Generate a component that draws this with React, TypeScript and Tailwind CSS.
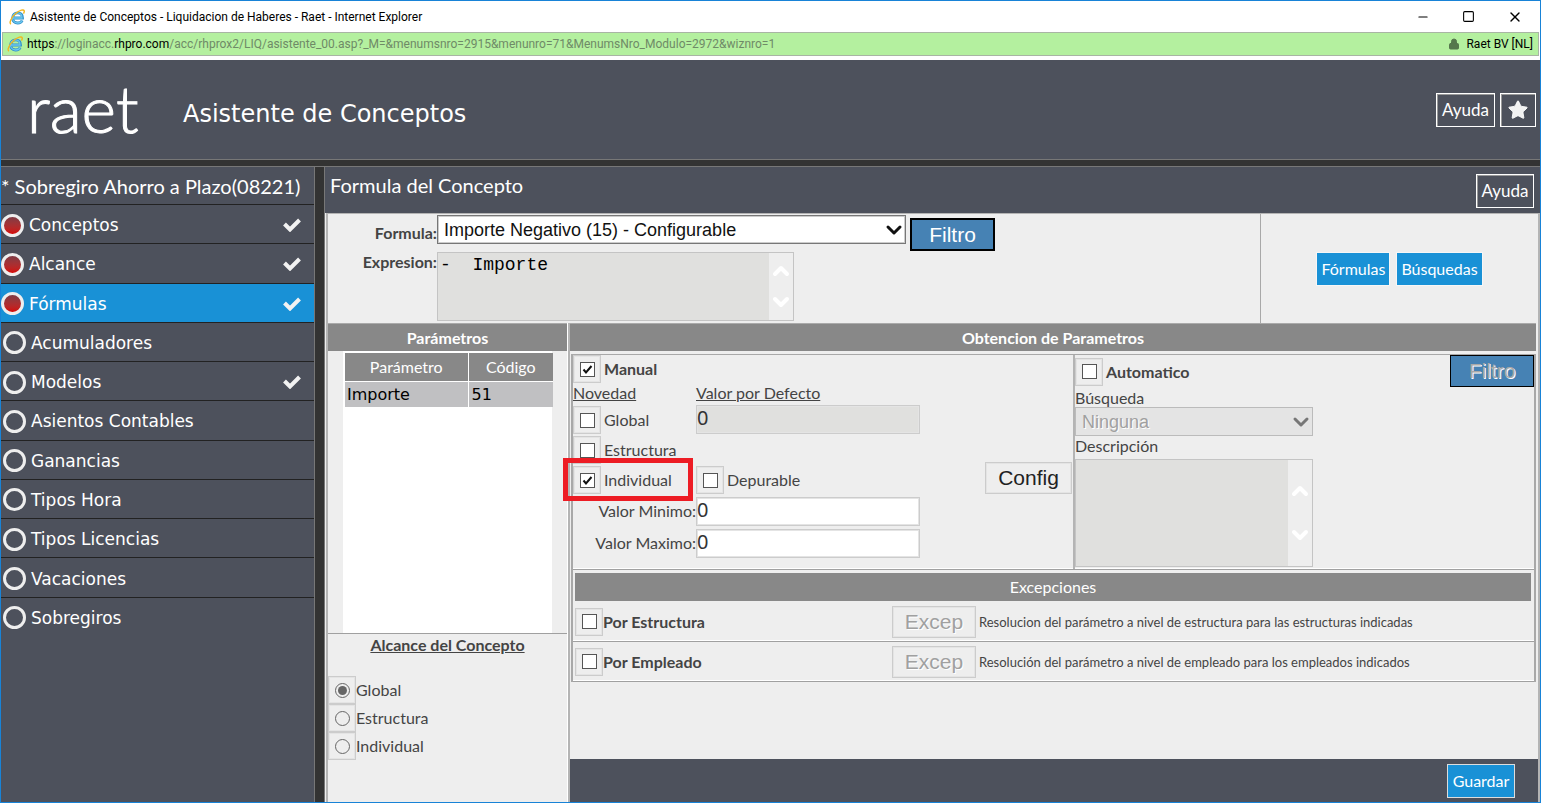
import React, { useState } from 'react';
import { ChevronDown, ChevronUp, Lock, Minus, Square, Star, X } from 'lucide-react';

interface MenuEntry {
  label: string;
  visited?: boolean;
  done?: boolean;
}

const MENU: MenuEntry[] = [
  { label: 'Conceptos', visited: true, done: true },
  { label: 'Alcance', visited: true, done: true },
  { label: 'Fórmulas', visited: true, done: true },
  { label: 'Acumuladores' },
  { label: 'Modelos', done: true },
  { label: 'Asientos Contables' },
  { label: 'Ganancias' },
  { label: 'Tipos Hora' },
  { label: 'Tipos Licencias' },
  { label: 'Vacaciones' },
  { label: 'Sobregiros' },
];

const FRAME = 'grid size-7 shrink-0 place-items-center border border-[#ccc] shadow-[inset_0_0_0_1px_#e4e4e4]';
const FIELD =
  "h-[29px] border border-[#ccc] pb-1 shadow-[inset_0_0_0_1px_#e4e4e4] font-['Noto_Sans',sans-serif] text-[20px] text-[#333]";
const OUTLINE_BUTTON = 'border border-white shadow-[inset_1px_1px_0_#999] text-[17px] leading-5';

const IeIcon: React.FC = () => (
  <svg viewBox="0 0 16 16" className="size-4 shrink-0">
    <path d="M4 9h9.500C13.500 5.500 11.500 3.800 8.700 3.800 5.800 3.800 3.600 5.900 3.600 9c0 3 2.200 5 5.100 5 2.100 0 3.800-.900 4.500-2.500" fill="none" stroke="#2f8fc8" strokeWidth="2.800" />
    <path d="M4 9h9C13 5.500 11.500 3.800 8.700 3.800 5.800 3.800 3.600 5.900 3.600 9c0 3 2.200 5 5.100 5 2.100 0 3.800-.900 4.500-2.500" fill="none" stroke="#6cc7f0" strokeWidth="1.300" />
    <path d="M2 15.200C-.4 14 2.500 8 7 4.300 11 1 14.600.200 15.200 1.700c.3.900-.1 1.900-.7 2.900" fill="none" stroke="#f3b61f" strokeWidth="1.400" />
  </svg>
);

const CheckMark: React.FC = () => (
  <svg viewBox="0 0 18 14" className="h-[14px] w-[18px]">
    <path d="M1.500 6 7 11.500 16.500 2" fill="none" stroke="#f2f2f2" strokeWidth="4" />
  </svg>
);

interface CheckProps {
  id: string;
  label: string;
  checked?: boolean;
  bold?: boolean;
  tight?: boolean;
}

const Check: React.FC<CheckProps> = ({ id, label, checked, bold, tight }) => (
  <div className={`flex items-center ${tight ? '' : 'gap-[3px]'}`}>
    <span className={FRAME}>
      <input
        id={id}
        type="checkbox"
        defaultChecked={checked}
        className="peer col-start-1 row-start-1 size-[15px] appearance-none border border-[#555] bg-white"
      />
      <svg viewBox="0 0 15 15" className="pointer-events-none invisible col-start-1 row-start-1 size-[15px] peer-checked:visible">
        <path d="M3.500 7.500 6 10.500 11.500 4" fill="none" stroke="#111" strokeWidth="2" />
      </svg>
    </span>
    <label htmlFor={id} className={bold ? 'font-bold' : ''}>{label}</label>
  </div>
);

const Radio: React.FC<{ id: string; label: string; checked?: boolean }> = ({ id, label, checked }) => (
  <div className="flex items-center">
    <span className={FRAME}>
      <input
        id={id}
        type="radio"
        name="alcance"
        defaultChecked={checked}
        className="peer col-start-1 row-start-1 size-[15px] appearance-none rounded-full border border-[#666]"
      />
      <span className="pointer-events-none invisible col-start-1 row-start-1 size-[9px] rounded-full bg-[#666] peer-checked:visible" />
    </span>
    <label htmlFor={id}>{label}</label>
  </div>
);

const ScrollArrows: React.FC = () => (
  <div className="flex w-6 flex-col items-center justify-evenly bg-[#eee] text-white">
    <ChevronUp className="size-6" strokeWidth={4} />
    <ChevronDown className="size-6" strokeWidth={4} />
  </div>
);

const ExceptionRow: React.FC<{ id: string; label: string; text: string }> = ({ id, label, text }) => (
  <div className="flex h-10 items-center border-b border-[#a0a0a0] pl-[2px] shadow-[inset_0_-1px_0_white]">
    <div className="w-[317px]">
      <Check id={id} label={label} bold tight />
    </div>
    <button
      disabled
      className="h-8 w-[84px] border border-[#ccc] font-['Liberation_Sans',sans-serif] text-[21px] leading-6 text-[#a0a0a0] shadow-[inset_0_0_0_1px_#e4e4e4] [text-shadow:1px_1px_0_white]"
    >
      Excep
    </button>
    <span className="pl-[3px] text-[13px]">{text}</span>
  </div>
);

export default function App() {
  const [active, setActive] = useState('Fórmulas');

  return (
    <div className="flex min-h-screen flex-col border border-[#1883d7] bg-white font-['Lato',sans-serif] text-base leading-5 text-[#444]">
      {/* Window title bar */}
      <div className="flex h-[31px] items-center pl-2 font-['Roboto',sans-serif] text-[12px] text-black">
        <IeIcon />
        <span className="pl-[5px]">Asistente de Conceptos - Liquidacion de Haberes - Raet - Internet Explorer</span>
        <div className="ml-auto flex items-center gap-[32px] pr-[17px]">
          <button aria-label="Minimizar"><Minus className="size-[14px]" strokeWidth={2} /></button>
          <button aria-label="Maximizar"><Square className="size-[13px]" strokeWidth={2} /></button>
          <button aria-label="Cerrar"><X className="size-4" strokeWidth={2} /></button>
        </div>
      </div>

      {/* Address bar */}
      <div className="mx-px mb-1 flex h-6 items-center border border-[#a9b5a4] bg-[#b4f09f] pl-1 pr-[5px] font-['Roboto',sans-serif] text-[12px] text-[#6f8a67]">
        <IeIcon />
        <span className="pl-1">
          <span className="text-black">https</span>://loginacc.<span className="text-black">rhpro.com</span>
          /acc/rhprox2/LIQ/asistente_00.asp?_M=&amp;menumsnro=2915&amp;menunro=71&amp;MenumsNro_Modulo=2972&amp;wiznro=1
        </span>
        <Lock className="ml-auto size-3 fill-[#55774c] text-[#55774c]" />
        <span className="pl-[6px] text-black">Raet BV [NL]</span>
      </div>

      {/* Application header */}
      <header className="flex h-[100px] items-center border-b border-[#777] bg-[#4d515c] text-white">
        <span className="w-[182px] pb-1 pl-[26px] text-[66px] leading-[66px] font-light [-webkit-text-stroke:1px_white]">raet</span>
        <h1 className="pt-2 font-['DejaVu_Sans',sans-serif] text-[24px] leading-8">Asistente de Conceptos</h1>
        <div className="ml-auto flex gap-[5px] pr-1">
          <button className={`h-[34px] w-[59px] ${OUTLINE_BUTTON}`}>Ayuda</button>
          <button aria-label="Favorito" className={`flex h-[34px] w-9 items-center justify-center ${OUTLINE_BUTTON}`}>
            <Star className="size-[22px] fill-[#f2f2f2]" strokeWidth={1} />
          </button>
        </div>
      </header>
      <div className="h-[7px] border-b border-[#777] bg-[#333]" />

      <div className="flex flex-1">
        {/* Wizard steps */}
        <nav className="w-[313px] shrink-0 bg-[#4d515c] text-white">
          <h2 className="h-[37px] text-[20px] leading-[38px]">* Sobregiro Ahorro a Plazo(08221)</h2>
          <div className="flex h-[432px] flex-col font-['DejaVu_Sans',sans-serif] text-[17px]">
            {MENU.map((item) => (
              <button
                key={item.label}
                onClick={() => setActive(item.label)}
                className={`flex flex-1 items-center border-t border-[#222] pt-[2px] pr-[13px] text-left ${
                  item.label === active ? 'bg-[#1991d6]' : ''
                }`}
              >
                <span
                  className={`mr-[5px] size-[23px] rounded-full border-3 border-[#eee] ${
                    item.visited ? 'bg-linear-to-b from-[#803a44] to-[#d40000]' : 'ml-[2px]'
                  }`}
                />
                <span className="flex-1">{item.label}</span>
                {item.done && <CheckMark />}
              </button>
            ))}
          </div>
        </nav>

        <div className="w-[11px] shrink-0 border-x border-[#777] bg-[#333]" />

        <main className="flex min-w-0 flex-1 flex-col bg-[#eee]">
          <div className="flex h-[46px] items-start bg-[#4d515c] pl-[5px] pr-[6px] text-white">
            <h2 className="pt-1 text-[20px] leading-7">Formula del Concepto</h2>
            <button className={`mt-[7px] ml-auto h-[34px] w-[58px] ${OUTLINE_BUTTON}`}>Ayuda</button>
          </div>

          <div className="ml-px flex flex-1 flex-col border-t border-l-2 border-r-2 border-[#b4b4b4]">
            {/* Formula */}
            <div className="flex h-[109px]">
              <div className="grid flex-1 grid-cols-[109px_1fr] grid-rows-[38px_1fr] border-r border-[#a8a8a8]">
                <label htmlFor="formula" className="pt-[9px] text-right font-bold">Formula:</label>
                <div className="flex gap-1 pt-px text-[#111]">
                  <div className="relative h-[29px] w-[469px]">
                    <select
                      id="formula"
                      className="h-full w-full appearance-none border border-[#777] bg-white pl-[6px] font-['Liberation_Sans',sans-serif] text-[18px] leading-5 shadow-[inset_0_0_0_1px_#ccc]"
                    >
                      <option>Importe Negativo (15) - Configurable</option>
                    </select>
                    <ChevronDown className="pointer-events-none absolute top-[3px] right-0 size-6" strokeWidth={3} />
                  </div>
                  <button className="mt-[3px] h-[33px] w-[85px] border-2 border-black bg-[#4682b4] font-['Liberation_Sans',sans-serif] text-[21px] leading-6 text-white">
                    Filtro
                  </button>
                </div>
                <label htmlFor="expresion" className="text-right font-bold">Expresion:</label>
                <div className="flex h-[69px] w-[357px] border border-[#c4c4c4]">
                  <textarea
                    id="expresion"
                    readOnly
                    value={'-  Importe'}
                    className="min-w-0 flex-1 resize-none bg-[#e0e0de] pt-[2px] pl-[2px] font-['Liberation_Mono',monospace] text-[18px] leading-5 text-black outline-none"
                  />
                  <ScrollArrows />
                </div>
              </div>
              <div className="flex w-[277px] items-center justify-center gap-[6px] text-white">
                <button className="h-[34px] border border-[#f6f6f6] bg-[#1991d6] px-1">Fórmulas</button>
                <button className="h-[34px] border border-[#f6f6f6] bg-[#1991d6] px-1">Búsquedas</button>
              </div>
            </div>

            <div className="flex flex-1">
              {/* Parameter list */}
              <section className="flex w-[240px] shrink-0 flex-col border-r border-white">
                <h3 className="h-7 border-t border-[#aaa] bg-[#888] text-center leading-[27px] font-bold text-white">Parámetros</h3>
                <div className="mx-[15px] h-[282px] bg-white pt-[2px] pl-[2px]">
                  <table className="w-[208px] table-fixed border-collapse">
                    <thead className="bg-[#888] text-white">
                      <tr className="h-7">
                        <th className="w-[123px] border-r border-white font-normal">Parámetro</th>
                        <th className="font-normal">Código</th>
                      </tr>
                    </thead>
                    <tbody className="bg-[#c0c0c2] font-['DejaVu_Sans',sans-serif] text-base leading-5 text-black">
                      <tr className="h-[26px] border-t border-white">
                        <td className="border-r border-white pt-px pl-[2px]">Importe</td>
                        <td className="pt-px pl-[3px]">51</td>
                      </tr>
                    </tbody>
                  </table>
                </div>
                <fieldset className="min-w-0 border-t border-[#a0a0a0] pt-px">
                  <h3 className="pb-[21px] text-center font-bold underline">Alcance del Concepto</h3>
                  <Radio id="alc-global" label="Global" checked />
                  <Radio id="alc-estructura" label="Estructura" />
                  <Radio id="alc-individual" label="Individual" />
                </fieldset>
              </section>

              <section className="flex min-w-0 flex-1 flex-col border-l-2 border-[#b4b4b4]">
                <h3 className="mr-[2px] h-7 border-t border-[#aaa] bg-[#888] text-center leading-[27px] font-bold text-white">
                  Obtencion de Parametros
                </h3>

                <div className="mt-[3px] mr-[2px] ml-px border-t border-l-2 border-r-2 border-[#a8a8a8]">
                  <div className="flex h-[215px] border-b border-[#a0a0a0] shadow-[inset_0_-1px_0_white]">
                    {/* Manual */}
                    <div className="flex flex-1 items-start">
                      <div>
                        <Check id="manual" label="Manual" checked bold />
                        <div className="grid h-[22px] grid-cols-[123px_224px] underline">
                          <span>Novedad</span>
                          <span>Valor por Defecto</span>
                        </div>
                        <div className="grid h-[30px] grid-cols-[123px_224px]">
                          <Check id="nov-global" label="Global" />
                          <input aria-label="Valor por Defecto" disabled defaultValue="0" className={`bg-[#e0e0de] ${FIELD}`} />
                        </div>
                        <div className="grid h-[30px] grid-cols-[123px_224px]">
                          <Check id="nov-estructura" label="Estructura" />
                        </div>
                        <div className="relative mb-[2px] grid h-[30px] grid-cols-[123px_224px]">
                          <Check id="nov-individual" label="Individual" checked />
                          <Check id="depurable" label="Depurable" />
                          <div className="pointer-events-none absolute -top-[7px] -left-[10px] h-[43px] w-[130px] border-[5px] border-[#ed1c24]" />
                        </div>
                        <div className="grid h-8 grid-cols-[123px_224px]">
                          <label htmlFor="minimo" className="pt-1 text-right">Valor Minimo:</label>
                          <input id="minimo" defaultValue="0" className={`bg-white ${FIELD}`} />
                        </div>
                        <div className="grid h-8 grid-cols-[123px_224px]">
                          <label htmlFor="maximo" className="pt-1 text-right">Valor Maximo:</label>
                          <input id="maximo" defaultValue="0" className={`bg-white ${FIELD}`} />
                        </div>
                      </div>
                      <button className="mt-[107px] mr-px ml-auto h-8 w-[87px] border border-[#ccc] font-['Liberation_Sans',sans-serif] text-[21px] leading-6 text-[#222] shadow-[inset_0_0_0_1px_#e4e4e4]">
                        Config
                      </button>
                    </div>

                    {/* Automatico */}
                    <div className="w-[461px] border-l-2 border-[#b4b4b4]">
                      <div className="flex h-[33px] justify-between">
                        <Check id="automatico" label="Automatico" bold />
                        <button
                          disabled
                          className="h-8 w-[84px] border border-black bg-[#4682b4] font-['Liberation_Sans',sans-serif] text-[21px] leading-6 text-[#a8a8a8] [text-shadow:1px_1px_0_white]"
                        >
                          Filtro
                        </button>
                      </div>
                      <label htmlFor="busqueda" className="block h-[19px]">Búsqueda</label>
                      <div className="relative h-[29px] w-[238px]">
                        <select
                          id="busqueda"
                          disabled
                          className="h-full w-full appearance-none border border-[#bbb] bg-[#e4e4e4] pl-[6px] font-['Liberation_Sans',sans-serif] text-[18px] leading-5 text-[#a0a0a0] opacity-100 [text-shadow:1px_1px_0_white]"
                        >
                          <option>Ninguna</option>
                        </select>
                        <ChevronDown className="pointer-events-none absolute top-[3px] right-0 size-6 text-[#777]" strokeWidth={3} />
                      </div>
                      <label htmlFor="descripcion" className="block h-[23px]">Descripción</label>
                      <div className="flex h-[108px] w-[238px] border border-[#c4c4c4]">
                        <textarea id="descripcion" disabled className="min-w-0 flex-1 resize-none bg-[#e0e0de]" />
                        <ScrollArrows />
                      </div>
                    </div>
                  </div>

                  {/* Excepciones */}
                  <h4 className="mt-[3px] mr-[3px] mb-px ml-[2px] h-7 bg-[#888] text-center leading-7 text-white">Excepciones</h4>
                  <ExceptionRow id="por-estructura" label="Por Estructura" text="Resolucion del parámetro a nivel de estructura para las estructuras indicadas" />
                  <ExceptionRow id="por-empleado" label="Por Empleado" text="Resolución del parámetro a nivel de empleado para los empleados indicados" />
                </div>

                <footer className="mt-auto flex h-[43px] items-center justify-end bg-[#4d515c] pr-[23px]">
                  <button className="h-[34px] w-[68px] border border-[#ddd] bg-[#1991d6] text-white">Guardar</button>
                </footer>
              </section>
            </div>
          </div>
        </main>
      </div>
    </div>
  );
}
